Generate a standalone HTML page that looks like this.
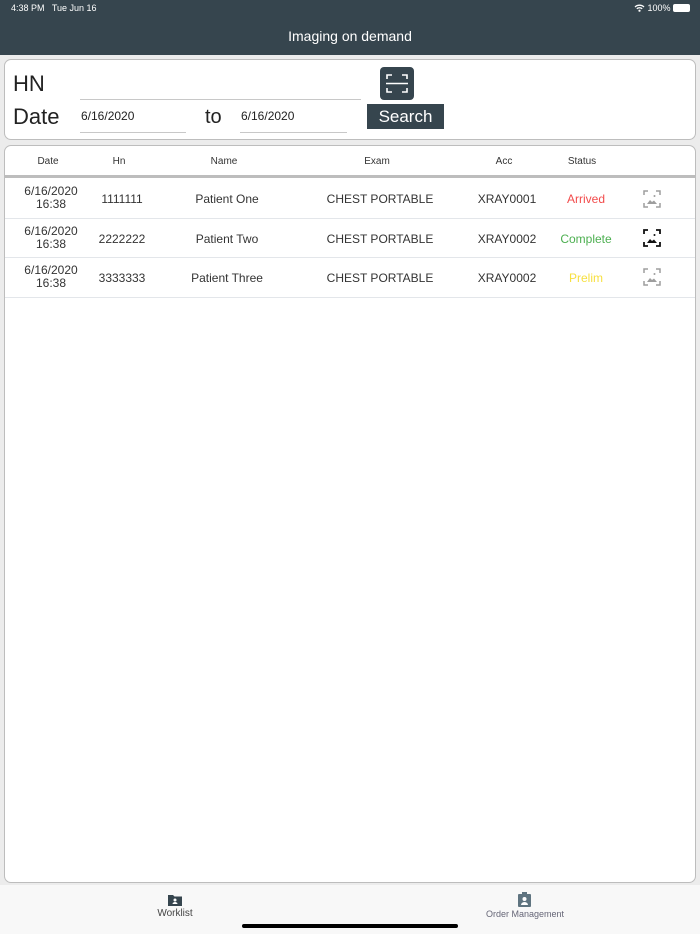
<!DOCTYPE html>
<html><head><meta charset="utf-8"><style>
*{margin:0;padding:0;box-sizing:border-box}
body{width:700px;height:934px;background:#ececec;font-family:"Liberation Sans",sans-serif;position:relative;overflow:hidden;color:#222}
.hdr{position:absolute;left:0;top:0;width:700px;height:55px;background:#36454e;color:#fff}
.abs{position:absolute}
.card{position:absolute;background:#fff;border:1px solid #bdbdbd;border-radius:7px}
.c{position:absolute;transform:translateX(-50%);white-space:nowrap;text-align:center}
.row{position:absolute;left:5px;width:690px;height:40px;border-bottom:1px solid #e3e6ea;font-size:12px;color:#333}
.line{position:absolute;height:1px;background:#c8c8c8}
</style></head><body>
<div class="hdr">
<div class="abs" style="left:11px;top:3px;font-size:9px">4:38 PM&nbsp;&nbsp; Tue Jun 16</div>
<div class="abs" style="right:10px;top:3px;font-size:9px">
<svg width="11" height="8" viewBox="0 0 11 8" style="vertical-align:-1px"><path d="M1 3a6.5 6.5 0 0 1 9 0M2.8 4.8a4 4 0 0 1 5.4 0" stroke="#fff" stroke-width="1.3" fill="none"/><circle cx="5.5" cy="6.7" r="1.1" fill="#fff"/></svg> 100% <span style="display:inline-block;width:17px;height:8px;background:#fff;border-radius:2px;vertical-align:-1px"></span></div>
<div class="c" style="left:350px;top:28px;font-size:14px">Imaging on demand</div>
</div>

<div class="card" style="left:4px;top:59px;width:692px;height:81px">
<div class="abs" style="left:8px;top:11px;font-size:22px;color:#222">HN</div>
<div class="abs" style="left:8px;top:44px;font-size:22px;color:#222">Date</div>
<div class="line" style="left:75px;top:39px;width:281px"></div>
<div class="abs" style="left:76px;top:49px;font-size:12px">6/16/2020</div>
<div class="line" style="left:75px;top:72px;width:106px"></div>
<div class="abs" style="left:200px;top:46px;font-size:20px">to</div>
<div class="abs" style="left:236px;top:49px;font-size:12px">6/16/2020</div>
<div class="line" style="left:235px;top:72px;width:107px"></div>
<div class="abs" style="left:375px;top:7px;width:34px;height:33px;background:#36454e;border-radius:4px">
<svg width="34" height="33" viewBox="0 0 34 33"><path d="M7 12V8h5M22 8h5v4M7 21v4h5M22 25h5v-4" stroke="#fff" stroke-width="1.6" fill="none"/><path d="M6 16.5h22" stroke="#fff" stroke-width="1.6"/></svg></div>
<div class="abs" style="left:362px;top:44px;width:77px;height:25px;background:#36454e;color:#fff;font-size:17px;text-align:center;line-height:25px">Search</div>
</div>

<div class="card" style="left:4px;top:145px;width:692px;height:738px;overflow:hidden">
<div style="position:absolute;left:0;top:0;width:690px;height:32px;border-bottom:3px solid #bdbdbd;font-size:10px;color:#333">
<div class="c" style="left:43px;top:10px">Date</div>
<div class="c" style="left:114px;top:10px">Hn</div>
<div class="c" style="left:219px;top:10px">Name</div>
<div class="c" style="left:372px;top:10px">Exam</div>
<div class="c" style="left:499px;top:10px">Acc</div>
<div class="c" style="left:577px;top:10px">Status</div>
</div>
</div>

<div class="row" style="top:179px">
<div class="c" style="left:46px;top:6px;line-height:13px">6/16/2020<br>16:38</div>
<div class="c" style="left:117px;top:13px">1111111</div>
<div class="c" style="left:222px;top:13px">Patient One</div>
<div class="c" style="left:375px;top:13px">CHEST PORTABLE</div>
<div class="c" style="left:502px;top:13px">XRAY0001</div>
<div class="c" style="left:581px;top:13px;color:#f24b4b">Arrived</div>
<svg class="abs" style="left:638px;top:11px" width="18" height="18" viewBox="0 0 18 18"><path d="M1 5V1h4M13 1h4v4M1 13v4h4M13 17h4v-4" stroke="#9e9e9e" stroke-width="1.5" fill="none"/><circle cx="11.5" cy="6" r="1" fill="#9e9e9e"/><path d="M4 14l3-4 2 2 2-1.5 3 3.5z" fill="#9e9e9e"/></svg>
</div>
<div class="row" style="top:218px">
<div class="c" style="left:46px;top:7px;line-height:13px">6/16/2020<br>16:38</div>
<div class="c" style="left:117px;top:14px">2222222</div>
<div class="c" style="left:222px;top:14px">Patient Two</div>
<div class="c" style="left:375px;top:14px">CHEST PORTABLE</div>
<div class="c" style="left:502px;top:14px">XRAY0002</div>
<div class="c" style="left:581px;top:14px;color:#4caf50">Complete</div>
<svg class="abs" style="left:638px;top:11px" width="18" height="18" viewBox="0 0 18 18"><path d="M1 5V1h4M13 1h4v4M1 13v4h4M13 17h4v-4" stroke="#111" stroke-width="1.8" fill="none"/><circle cx="11.5" cy="6" r="1" fill="#111"/><path d="M4 14l3-4 2 2 2-1.5 3 3.5z" fill="#111"/></svg>
</div>
<div class="row" style="top:258px">
<div class="c" style="left:46px;top:6px;line-height:13px">6/16/2020<br>16:38</div>
<div class="c" style="left:117px;top:13px">3333333</div>
<div class="c" style="left:222px;top:13px">Patient Three</div>
<div class="c" style="left:375px;top:13px">CHEST PORTABLE</div>
<div class="c" style="left:502px;top:13px">XRAY0002</div>
<div class="c" style="left:581px;top:13px;color:#f7e040">Prelim</div>
<svg class="abs" style="left:638px;top:10px" width="18" height="18" viewBox="0 0 18 18"><path d="M1 5V1h4M13 1h4v4M1 13v4h4M13 17h4v-4" stroke="#9e9e9e" stroke-width="1.5" fill="none"/><circle cx="11.5" cy="6" r="1" fill="#9e9e9e"/><path d="M4 14l3-4 2 2 2-1.5 3 3.5z" fill="#9e9e9e"/></svg>
</div>

<div class="abs" style="left:0;top:885px;width:700px;height:49px;background:#f8f8f8"></div>
<svg class="abs" style="left:168px;top:894px" width="14" height="12" viewBox="0 0 14 12"><path d="M0 1h5l1.5 1.5H14V12H0z" fill="#36454e"/><circle cx="7" cy="6" r="1.5" fill="#fff"/><path d="M4.5 10a2.5 2 0 0 1 5 0z" fill="#fff"/></svg>
<div class="c" style="left:175px;top:908px;font-size:10px;color:#444">Worklist</div>
<svg class="abs" style="left:518px;top:892px" width="13" height="15" viewBox="0 0 13 15"><rect x="0" y="2" width="13" height="13" rx="1" fill="#5f7480"/><rect x="4" y="0" width="5" height="3" fill="#5f7480"/><circle cx="6.5" cy="7" r="2" fill="#fff"/><path d="M3 13a3.5 3 0 0 1 7 0z" fill="#fff"/></svg>
<div class="c" style="left:525px;top:909px;font-size:9px;color:#667">Order Management</div>
<div class="abs" style="left:242px;top:924px;width:216px;height:4px;background:#000;border-radius:3px"></div>
</body></html>
